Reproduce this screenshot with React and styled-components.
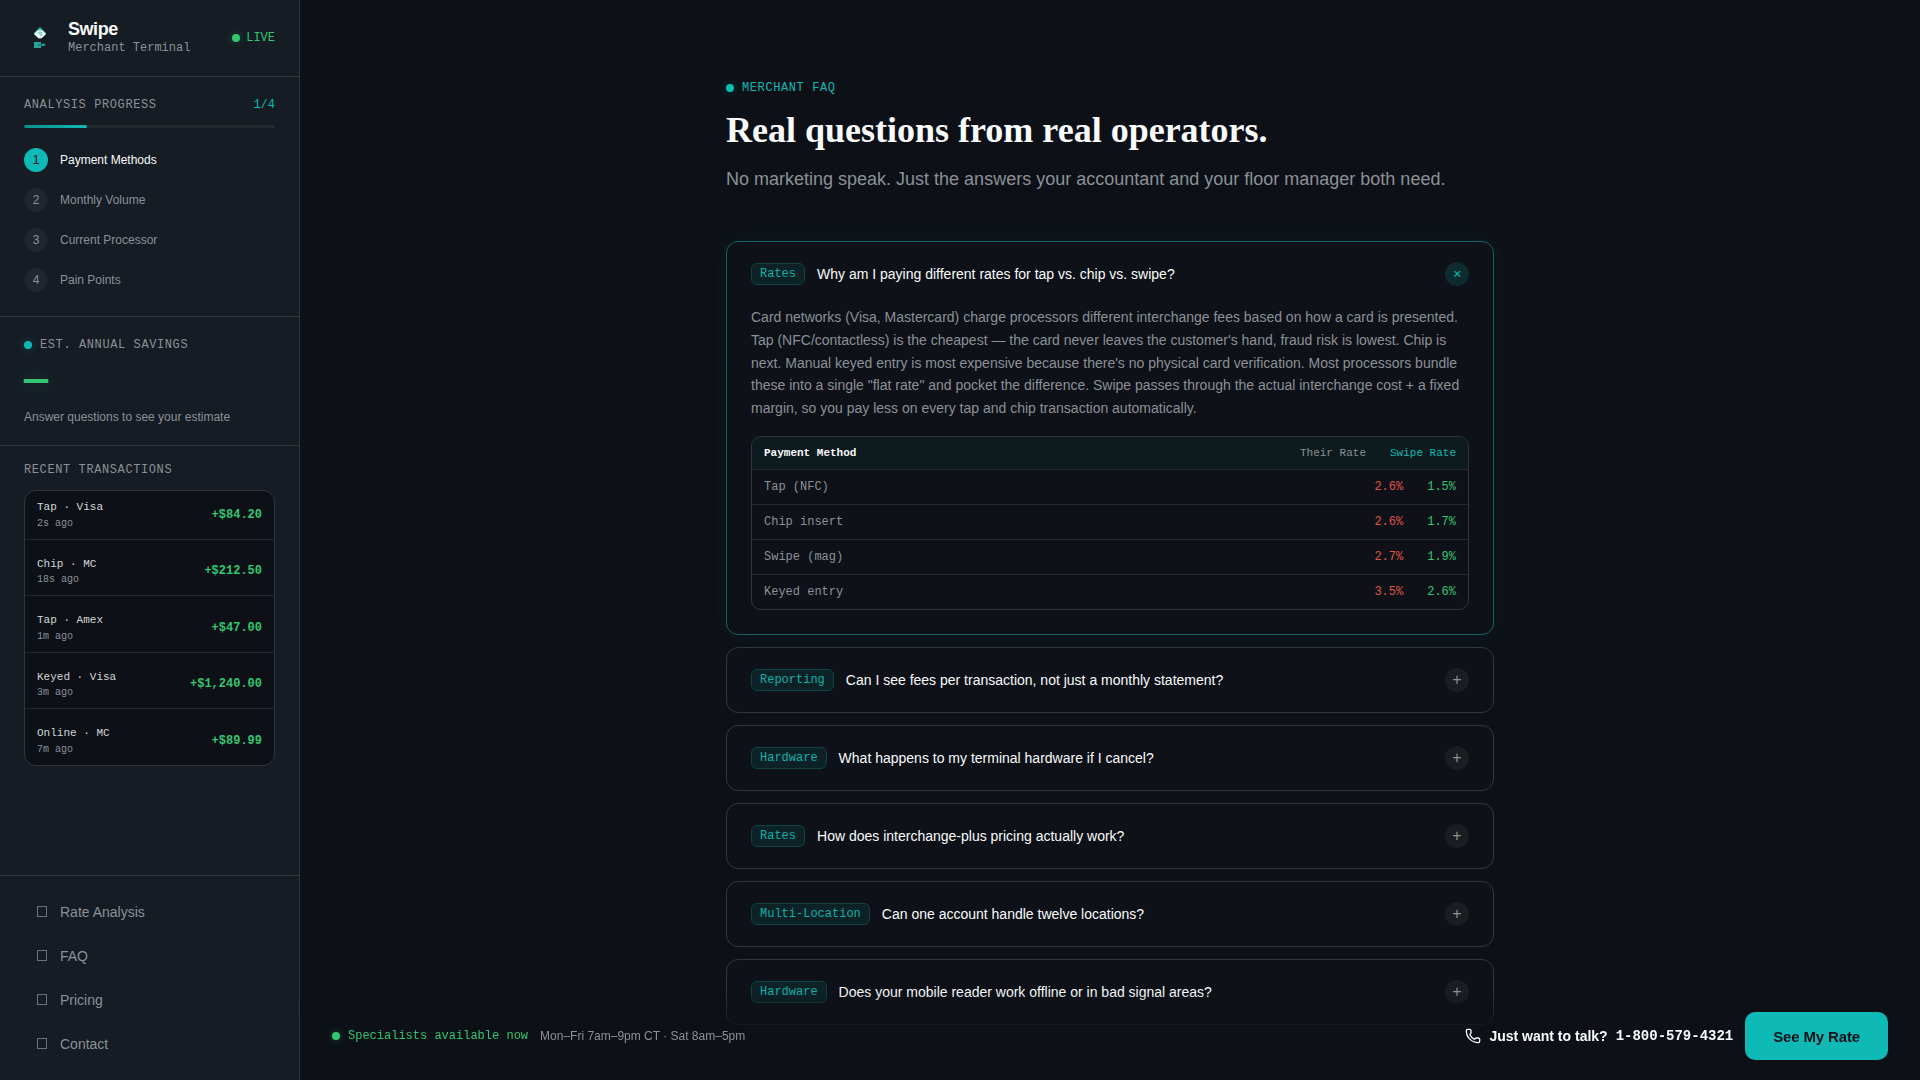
import React, { useState } from "react";
import styled, { createGlobalStyle, css, ThemeProvider } from "styled-components";
import { Phone } from "lucide-react";

const theme = {
  bg: "#0d1117",
  panel: "#161c24",
  line: "#32363c",
  lineSoft: "#25292e",
  text: "#f8fafb",
  muted: "#8b9096",
  teal: "#0fb9b5",
  green: "#32c671",
  red: "#e0534a",
  sans: '"Liberation Sans", Arial, sans-serif',
  serif: '"Liberation Serif", "Times New Roman", serif',
  mono: '"Liberation Mono", "Courier New", monospace',
};

const GlobalStyle = createGlobalStyle`
  *, *::before, *::after { box-sizing: border-box; }
  body {
    margin: 0;
    background: ${theme.bg};
    color: ${theme.text};
    font-family: ${theme.sans};
    font-size: 14px;
  }
  h1, h2, p, ul, ol { margin: 0; padding: 0; }
  ul, ol { list-style: none; }
  button { font: inherit; color: inherit; border: 0; cursor: pointer; }
  a { color: inherit; text-decoration: none; }
`;

const Shell = styled.div`
  display: flex;
  height: 100vh;
  overflow: hidden;
`;

/* ---------- Sidebar ---------- */

const Sidebar = styled.aside`
  display: flex;
  flex-direction: column;
  flex: 0 0 300px;
  background: ${({ theme }) => theme.panel};
  border-right: 1px solid ${({ theme }) => theme.line};
`;

const Brand = styled.header`
  display: flex;
  align-items: center;
  gap: 12px;
  padding: 20px 24px;
  border-bottom: 1px solid ${({ theme }) => theme.line};
`;

const BrandText = styled.div`
  display: grid;
  flex: 1;
  gap: 2px;
`;

const BrandName = styled.div`
  font-size: 18px;
  font-weight: 700;
  line-height: 18px;
  letter-spacing: -0.025em;
`;

const Mono = styled.span`
  display: block;
  font-family: ${({ theme }) => theme.mono};
  font-size: 12px;
  line-height: 16px;
  color: ${({ theme, $tone = "muted" }) => theme[$tone]};
`;

const Label = styled.h2`
  display: flex;
  align-items: center;
  gap: 8px;
  font-family: ${({ theme }) => theme.mono};
  font-size: 12px;
  font-weight: 400;
  line-height: 16px;
  letter-spacing: 0.05em;
  text-transform: uppercase;
  color: ${({ theme, $tone = "muted" }) => theme[$tone]};
`;

const Status = styled.div`
  display: flex;
  align-items: center;
  gap: ${({ $tight }) => ($tight ? "6px" : "8px")};
`;

const Dot = styled.span`
  width: 8px;
  height: 8px;
  border-radius: 50%;
  background: ${({ theme, $tone }) => theme[$tone]};
  box-shadow: 0 0 8px ${({ theme, $tone }) => theme[$tone]}4d;
`;

const Section = styled.section`
  padding: 20px 24px;
  border-bottom: 1px solid ${({ theme }) => theme.line};
`;

const SplitRow = styled.div`
  display: flex;
  justify-content: space-between;
`;

const Track = styled.div`
  height: 3px;
  margin: 12px 0 16px;
  border-radius: 2px;
  background: #24292f;
  overflow: hidden;
`;

const Fill = styled.div`
  height: 100%;
  border-radius: 2px;
  background: linear-gradient(90deg, #0d8f8a, ${({ theme }) => theme.teal});
`;

const Steps = styled.ol`
  display: grid;
  gap: 8px;
`;

const Step = styled.li`
  display: flex;
  align-items: center;
  gap: 12px;
  height: 32px;
  font-size: 12px;
  color: ${({ theme, $active }) => ($active ? theme.text : theme.muted)};
`;

const StepNumber = styled.span`
  display: grid;
  place-items: center;
  width: 24px;
  height: 24px;
  border-radius: 50%;
  background: ${({ theme, $active }) => ($active ? theme.teal : "#20262d")};
  color: ${({ theme, $active }) => ($active ? theme.bg : theme.muted)};
`;

const Savings = styled.div`
  margin: 8px 0;
  font-family: ${({ theme }) => theme.mono};
  font-size: 40px;
  font-weight: 700;
  line-height: 40px;
  color: ${({ theme }) => theme.green};
  text-shadow: 0 0 20px ${({ theme }) => theme.green}4d;
`;

const Hint = styled.p`
  font-size: 12px;
  line-height: 16px;
  color: ${({ theme }) => theme.muted};
`;

const Recent = styled.section`
  flex: 1;
  padding: 16px 24px;
`;

const TxList = styled.ul`
  display: grid;
  gap: 8px;
  margin-top: 12px;
  border: 1px solid ${({ theme }) => theme.line};
  border-radius: 12px;
  background: ${({ theme }) => theme.bg};
  overflow: hidden;
`;

const Tx = styled.li`
  display: flex;
  align-items: center;
  justify-content: space-between;
  padding: 8px 12px;
  border-bottom: 1px solid ${({ theme }) => theme.lineSoft};
  font-family: ${({ theme }) => theme.mono};
  line-height: 1.5;
  &:last-child { border-bottom: 0; }
`;

const TxName = styled.div`
  font-size: 11px;
  color: #d3d5d8;
`;

const TxTime = styled.div`
  font-size: 10px;
  color: ${({ theme }) => theme.muted};
`;

const TxAmount = styled.span`
  font-size: 12px;
  font-weight: 700;
  color: ${({ theme }) => theme.green};
`;

const Nav = styled.nav`
  display: grid;
  gap: 4px;
  padding: 16px 24px;
  border-top: 1px solid ${({ theme }) => theme.line};
`;

const NavLink = styled.a`
  display: flex;
  align-items: center;
  gap: 12px;
  height: 40px;
  padding: 0 12px;
  font-size: 14px;
  color: ${({ theme }) => theme.muted};
`;

/* ---------- Main column ---------- */

const Main = styled.main`
  flex: 1;
  min-width: 0;
  overflow: hidden;
  padding: 80px 32px 0;
`;

const Column = styled.div`
  max-width: 768px;
  margin: 0 auto;
`;

const Title = styled.h1`
  margin-top: 12px;
  font-family: ${({ theme }) => theme.serif};
  font-size: 36px;
  font-weight: 700;
  line-height: 45px;
`;

const Lead = styled.p`
  margin-top: 12px;
  font-size: 18px;
  line-height: 28px;
  color: ${({ theme }) => theme.muted};
`;

const FaqList = styled.div`
  display: grid;
  gap: 12px;
  margin-top: 48px;
`;

const FaqCard = styled.article`
  border: 1px solid ${({ theme }) => theme.line};
  border-radius: 12px;
  background: #0e1218;
  ${({ $open }) =>
    $open &&
    css`
      border-color: #17605f;
      box-shadow: 0 0 24px rgba(15, 185, 181, 0.06);
    `}
`;

const FaqHead = styled.button`
  display: flex;
  align-items: center;
  gap: 12px;
  width: 100%;
  padding: 20px 24px;
  background: none;
  font-size: 14px;
  text-align: left;
`;

const Tag = styled.span`
  padding: 2px 8px;
  border: 1px solid #114340;
  border-radius: 6px;
  background: #0d2226;
  font-family: ${({ theme }) => theme.mono};
  font-size: 12px;
  line-height: 16px;
  color: #12b0a9;
`;

const Question = styled.span`
  flex: 1;
  line-height: 20px;
`;

const Toggle = styled.span`
  display: grid;
  place-items: center;
  width: 24px;
  height: 24px;
  border-radius: 50%;
  font-size: 16px;
  line-height: 24px;
  background: ${({ $open }) => ($open ? "#0e2c30" : "#1a1d22")};
  color: ${({ theme, $open }) => ($open ? theme.teal : theme.muted)};
  transform: ${({ $open }) => ($open ? "rotate(45deg)" : "none")};
`;

const FaqBody = styled.div`
  padding: 0 24px 24px;
`;

const Answer = styled.p`
  font-size: 14px;
  line-height: 1.625;
  color: ${({ theme }) => theme.muted};
`;

const RateTable = styled.table`
  display: block;
  margin-top: 16px;
  border: 1px solid ${({ theme }) => theme.line};
  border-radius: 10px;
  overflow: hidden;
  font-family: ${({ theme }) => theme.mono};
  font-size: 12px;
  line-height: 18px;

  thead, tbody { display: block; }
  th, td { padding: 0; font-weight: 400; text-align: left; }
  th:first-child, td:first-child { flex: 1; }
`;

const RateRow = styled.tr`
  display: flex;
  gap: 24px;
  padding: 8px 12px;
  border-top: 1px solid ${({ theme }) => theme.lineSoft};
  color: ${({ theme }) => theme.muted};
`;

const RateHeadRow = styled(RateRow)`
  border-top: 0;
  background: #0d1b1e;
  font-size: 11px;
  line-height: 16px;

  th:first-child { font-weight: 700; color: ${({ theme }) => theme.text}; }
  th:last-child { color: ${({ theme }) => theme.teal}; }
`;

const Rate = styled.td`
  color: ${({ theme, $tone }) => theme[$tone]};
`;

/* ---------- Floating contact bar ---------- */

const ContactBar = styled.footer`
  position: fixed;
  left: 300px;
  right: 0;
  bottom: 0;
  display: flex;
  align-items: center;
  justify-content: space-between;
  padding: 20px 32px;
  background: linear-gradient(to top, ${({ theme }) => theme.bg} 50%, transparent);
`;

const BarGroup = styled.div`
  display: flex;
  align-items: center;
  gap: 12px;
`;

const CallLink = styled.a`
  display: flex;
  align-items: center;
  gap: 8px;
  font-size: 14px;
  font-weight: 700;
`;

const CallNumber = styled.span`
  font-family: ${({ theme }) => theme.mono};
`;

const Cta = styled.button`
  height: 48px;
  padding: 0 28px;
  border-radius: 10px;
  background: ${({ theme }) => theme.teal};
  color: ${({ theme }) => theme.bg};
  font-size: 15px;
  font-weight: 700;
  letter-spacing: -0.01em;
`;

/* ---------- Drawings ---------- */

const Logo = () => (
  <svg width="32" height="32" viewBox="0 0 32 32" aria-hidden="true">
    <path d="M16 5 L22 11 L21 13 H11 L10 11 Z" fill="#2bb3a3" />
    <path d="M10 12 L13 9 Q16 7 19 9 L22 12 L19 15 Q16 18 13 15 Z" fill="#f4fbfa" />
    <path d="M14 12 A2 2 0 1 1 16 14 M15 12 H17" fill="none" stroke="#5cc4b8" />
    <path d="M10 20 H17 V22 H19 V21 L22 23 L19 24 H17 V26 H10 Z" fill="#25a598" />
    <path d="M14 23 H18" stroke="#0f5f5b" />
  </svg>
);

const NavGlyph = () => (
  <svg width="12" height="14" viewBox="0 0 12 14" fill="none" aria-hidden="true">
    <rect x="1.5" y="1.5" width="9" height="10" stroke="#6d7278" />
  </svg>
);

/* ---------- Data ---------- */

const steps = ["Payment Methods", "Monthly Volume", "Current Processor", "Pain Points"];

const transactions = [
  ["Tap · Visa", "2s ago", "+$84.20"],
  ["Chip · MC", "18s ago", "+$212.50"],
  ["Tap · Amex", "1m ago", "+$47.00"],
  ["Keyed · Visa", "3m ago", "+$1,240.00"],
  ["Online · MC", "7m ago", "+$89.99"],
];

const links = ["Rate Analysis", "FAQ", "Pricing", "Contact"];

const rates = [
  ["Tap (NFC)", "2.6%", "1.5%"],
  ["Chip insert", "2.6%", "1.7%"],
  ["Swipe (mag)", "2.7%", "1.9%"],
  ["Keyed entry", "3.5%", "2.6%"],
];

const faqs = [
  {
    tag: "Rates",
    question: "Why am I paying different rates for tap vs. chip vs. swipe?",
    answer:
      "Card networks (Visa, Mastercard) charge processors different interchange fees based on how a card is presented. Tap (NFC/contactless) is the cheapest — the card never leaves the customer's hand, fraud risk is lowest. Chip is next. Manual keyed entry is most expensive because there's no physical card verification. Most processors bundle these into a single \"flat rate\" and pocket the difference. Swipe passes through the actual interchange cost + a fixed margin, so you pay less on every tap and chip transaction automatically.",
    rates,
  },
  { tag: "Reporting", question: "Can I see fees per transaction, not just a monthly statement?" },
  { tag: "Hardware", question: "What happens to my terminal hardware if I cancel?" },
  { tag: "Rates", question: "How does interchange-plus pricing actually work?" },
  { tag: "Multi-Location", question: "Can one account handle twelve locations?" },
  { tag: "Hardware", question: "Does your mobile reader work offline or in bad signal areas?" },
];

function FaqItem({ item, open, onToggle }) {
  return (
    <FaqCard $open={open}>
      <FaqHead type="button" aria-expanded={open} onClick={onToggle}>
        <Tag>{item.tag}</Tag>
        <Question>{item.question}</Question>
        <Toggle $open={open} aria-hidden="true">+</Toggle>
      </FaqHead>
      {open && item.answer && (
        <FaqBody>
          <Answer>{item.answer}</Answer>
          <RateTable>
            <thead>
              <RateHeadRow>
                <th scope="col">Payment Method</th>
                <th scope="col">Their Rate</th>
                <th scope="col">Swipe Rate</th>
              </RateHeadRow>
            </thead>
            <tbody>
              {item.rates.map(([method, theirs, ours]) => (
                <RateRow key={method}>
                  <td>{method}</td>
                  <Rate $tone="red">{theirs}</Rate>
                  <Rate $tone="green">{ours}</Rate>
                </RateRow>
              ))}
            </tbody>
          </RateTable>
        </FaqBody>
      )}
    </FaqCard>
  );
}

export default function App() {
  const [openIndex, setOpenIndex] = useState(0);
  const current = 1;

  return (
    <ThemeProvider theme={theme}>
      <GlobalStyle />
      <Shell>
        <Sidebar>
          <Brand>
            <Logo />
            <BrandText>
              <BrandName>Swipe</BrandName>
              <Mono>Merchant Terminal</Mono>
            </BrandText>
            <Status $tight>
              <Dot $tone="green" />
              <Mono $tone="green">LIVE</Mono>
            </Status>
          </Brand>

          <Section>
            <SplitRow>
              <Label>Analysis Progress</Label>
              <Mono $tone="teal">{current}/{steps.length}</Mono>
            </SplitRow>
            <Track>
              <Fill style={{ width: `${(current / steps.length) * 100}%` }} />
            </Track>
            <Steps>
              {steps.map((name, i) => (
                <Step key={name} $active={i + 1 === current}>
                  <StepNumber $active={i + 1 === current}>{i + 1}</StepNumber>
                  {name}
                </Step>
              ))}
            </Steps>
          </Section>

          <Section>
            <Label><Dot $tone="teal" />Est. Annual Savings</Label>
            <Savings>—</Savings>
            <Hint>Answer questions to see your estimate</Hint>
          </Section>

          <Recent>
            <Label>Recent Transactions</Label>
            <TxList>
              {transactions.map(([name, time, amount]) => (
                <Tx key={name}>
                  <div>
                    <TxName>{name}</TxName>
                    <TxTime>{time}</TxTime>
                  </div>
                  <TxAmount>{amount}</TxAmount>
                </Tx>
              ))}
            </TxList>
          </Recent>

          <Nav>
            {links.map((name) => (
              <NavLink key={name} href="#">
                <NavGlyph />
                {name}
              </NavLink>
            ))}
          </Nav>
        </Sidebar>

        <Main>
          <Column>
            <Label as="p" $tone="teal"><Dot $tone="teal" />Merchant FAQ</Label>
            <Title>Real questions from real operators.</Title>
            <Lead>No marketing speak. Just the answers your accountant and your floor manager both need.</Lead>
            <FaqList>
              {faqs.map((item, i) => (
                <FaqItem
                  key={item.question}
                  item={item}
                  open={i === openIndex}
                  onToggle={() => setOpenIndex(i === openIndex ? -1 : i)}
                />
              ))}
            </FaqList>
          </Column>
        </Main>

        <ContactBar>
          <BarGroup>
            <Status>
              <Dot $tone="green" />
              <Mono $tone="green">Specialists available now</Mono>
            </Status>
            <Hint>Mon–Fri 7am–9pm CT · Sat 8am–5pm</Hint>
          </BarGroup>
          <BarGroup>
            <CallLink href="tel:18005794321">
              <Phone size={16} aria-hidden="true" />
              Just want to talk?
              <CallNumber>1-800-579-4321</CallNumber>
            </CallLink>
            <Cta type="button">See My Rate</Cta>
          </BarGroup>
        </ContactBar>
      </Shell>
    </ThemeProvider>
  );
}
